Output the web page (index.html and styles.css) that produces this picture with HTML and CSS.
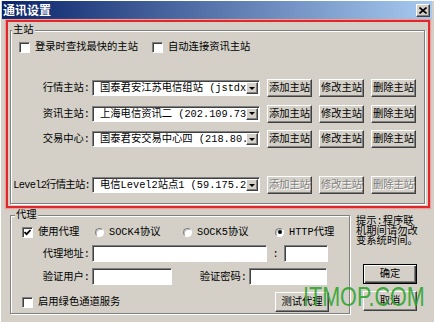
FILE: index.html
```html
<!DOCTYPE html>
<html lang="zh-CN">

<head>
    <meta charset="UTF-8">
    <meta name="viewport" content="width=device-width, initial-scale=1.0">
    <title>通讯设置</title>
    <link rel="stylesheet" href="styles.css">
</head>

<body>
    <div class="window">
        <div class="titlebar">
            <span class="title">通讯设置</span>
            <span class="close">
                <svg width="8" height="7" viewBox="0 0 8 7"><path d="M0.5 0.5 L7.5 6.5 M7.5 0.5 L0.5 6.5" stroke="#000" stroke-width="1.6" /></svg>
            </span>
        </div>

        <div class="highlight">
            <fieldset class="group main-group">
                <legend>主站</legend>
                <div class="opts">
                    <label class="check opt-fast"><span class="cb"></span>登录时查找最快的主站</label>
                    <label class="check"><span class="cb"></span>自动连接资讯主站</label>
                </div>

                <div class="servers">
                    <div class="srow">
                        <span class="lbl">行情主站:</span>
                        <div class="combo"><span class="combo-text">国泰君安江苏电信组站 (jstdx.gtja.net)</span><span class="drop"></span></div>
                        <button type="button" class="btn">添加主站</button>
                        <button type="button" class="btn">修改主站</button>
                        <button type="button" class="btn">删除主站</button>
                    </div>
                    <div class="srow">
                        <span class="lbl">资讯主站:</span>
                        <div class="combo"><span class="combo-text">上海电信资讯二 (202.109.73.16)</span><span class="drop"></span></div>
                        <button type="button" class="btn">添加主站</button>
                        <button type="button" class="btn">修改主站</button>
                        <button type="button" class="btn">删除主站</button>
                    </div>
                    <div class="srow">
                        <span class="lbl">交易中心:</span>
                        <div class="combo"><span class="combo-text">国泰君安交易中心四 (218.80.240.3)</span><span class="drop"></span></div>
                        <button type="button" class="btn">添加主站</button>
                        <button type="button" class="btn">修改主站</button>
                        <button type="button" class="btn">删除主站</button>
                    </div>
                </div>

                <div class="srow level2">
                    <span class="lbl tight">Level2行情主站:</span>
                    <div class="combo"><span class="combo-text">电信Level2站点1 (59.175.238.4)</span><span class="drop"></span></div>
                    <button type="button" class="btn" disabled>添加主站</button>
                    <button type="button" class="btn" disabled>修改主站</button>
                    <button type="button" class="btn" disabled>删除主站</button>
                </div>
            </fieldset>
        </div>

        <div class="lower">
            <fieldset class="group proxy-group">
                <legend>代理</legend>
                <div class="ptypes">
                    <label class="check"><span class="cb"><svg width="7" height="7" viewBox="0 0 7 7"><path d="M0.5 3 L2.6 5.2 L6.5 1" stroke="#000" stroke-width="1.7" fill="none" /></svg></span>使用代理</label>
                    <label class="radio"><span class="rb"></span>SOCK4协议</label>
                    <label class="radio"><span class="rb"></span>SOCK5协议</label>
                    <label class="radio"><span class="rb on"></span>HTTP代理</label>
                </div>
                <div class="prow">
                    <span class="lbl">代理地址:</span>
                    <span class="edit addr"></span>
                    <span class="sep">:</span>
                    <span class="edit port"></span>
                </div>
                <div class="prow">
                    <span class="lbl">验证用户:</span>
                    <span class="edit user"></span>
                    <span class="lbl pass-lbl">验证密码:</span>
                    <span class="edit pass"></span>
                </div>
                <div class="prow last">
                    <label class="check green"><span class="cb"></span>启用绿色通道服务</label>
                    <button type="button" class="btn test">测试代理</button>
                </div>
            </fieldset>

            <div class="side">
                <p class="hint">提示:程序联机期间请勿改变系统时间。</p>
                <button type="button" class="btn default">确定</button>
                <button type="button" class="btn cancel">取消</button>
            </div>
        </div>

        <div class="watermark">ITMOP.COM</div>
    </div>
</body>

</html>
```

FILE: styles.css
```css
* {
    box-sizing: border-box;
}

body {
    margin: 0;
    background: #d4d0c8;
    color: #000;
    font-family: "Liberation Mono", "Noto Sans CJK SC", monospace;
    font-size: 10.3px;
    line-height: 14px;
}

.window {
    position: relative;
    width: 434px;
    height: 322px;
    overflow: hidden;
    background: #d4d0c8;
    box-shadow: inset 1px 1px 0 #fff;
}

/* title bar */
.titlebar {
    display: flex;
    align-items: center;
    justify-content: space-between;
    height: 18px;
    margin: 1px 2px 0 2px;
    padding: 0 2px 0 1px;
    background: linear-gradient(to right, #0a246a, #a6caf0);
}

.title {
    color: #fff;
    font-family: "Noto Sans CJK SC", sans-serif;
    font-weight: bold;
    font-size: 12px;
}

.close {
    display: flex;
    align-items: center;
    justify-content: center;
    width: 14px;
    height: 13px;
    background: #d4d0c8;
    border: 1px solid;
    border-color: #fff #404040 #404040 #fff;
    box-shadow: inset -1px -1px 0 #808080;
}

/* red annotation box */
.highlight {
    width: 424px;
    height: 188px;
    margin: 1px 0 0 6px;
    border: 2px solid #e3262a;
    box-shadow: 0 0 1px 1px rgba(240, 130, 130, 0.6);
}

/* group boxes */
.group {
    margin: 0;
    padding: 0;
    min-width: 0;
    border: 1px solid #808080;
    box-shadow: 1px 1px 0 #fff, inset 1px 1px 0 #fff;
}

.group legend {
    margin-left: 1px;
    padding: 0 1px;
    line-height: 13px;
    background: #d4d0c8;
}

.main-group {
    width: 415px;
    margin: 2px 0 0 2px;
    padding-bottom: 9px;
}

.opts {
    display: flex;
    align-items: center;
    height: 14px;
    margin-top: 3px;
    padding-left: 8px;
}

.check,
.radio {
    display: flex;
    align-items: center;
    white-space: nowrap;
}

.opt-fast {
    width: 133px;
}

.cb {
    display: flex;
    align-items: center;
    justify-content: center;
    flex: none;
    width: 11px;
    height: 11px;
    margin-right: 5px;
    background: #fff;
    border: 1px solid;
    border-color: #808080 #fff #fff #808080;
    box-shadow: inset 1px 1px 0 #404040;
}

.rb {
    position: relative;
    flex: none;
    width: 9px;
    height: 9px;
    margin-right: 5px;
    border-radius: 50%;
    background: #fff;
    border: 1px solid;
    border-color: #808080 #fff #fff #808080;
    box-shadow: inset 1px 1px 0 #c0c0c0;
}

.rb.on::after {
    content: "";
    position: absolute;
    left: 1.5px;
    top: 1.5px;
    width: 4px;
    height: 4px;
    border-radius: 50%;
    background: #000;
}

/* server rows */
.servers {
    display: flex;
    flex-direction: column;
    gap: 7.5px;
    margin-top: 25px;
}

.srow {
    display: flex;
    align-items: center;
    height: 18px;
}

.level2 {
    margin-top: 28px;
}

.lbl {
    flex: none;
    width: 79px;
    margin-right: 2px;
    text-align: right;
    white-space: nowrap;
}

.tight {
    letter-spacing: -0.7px;
}

.combo {
    display: flex;
    flex: none;
    width: 168px;
    height: 16px;
    padding: 1px;
    background: #fff;
    border: 1px solid;
    border-color: #808080 #fff #fff #808080;
    box-shadow: inset 1px 1px 0 #404040;
}

.combo-text {
    flex: 1;
    overflow: hidden;
    white-space: nowrap;
    padding-left: 6px;
    line-height: 12px;
}

.drop {
    display: flex;
    align-items: center;
    justify-content: center;
    flex: none;
    width: 12px;
    height: 12px;
    background: #d4d0c8;
    border: 1px solid;
    border-color: #fff #404040 #404040 #fff;
    box-shadow: inset -1px -1px 0 #808080;
}

.drop::after {
    content: "";
    border-left: 3px solid transparent;
    border-right: 3px solid transparent;
    border-top: 3px solid #000;
}

.btn {
    flex: none;
    width: 45px;
    height: 18px;
    padding: 0;
    font: inherit;
    color: #000;
    background: #d4d0c8;
    border: 1px solid;
    border-color: #fff #404040 #404040 #fff;
    box-shadow: inset -1px -1px 0 #808080;
}

.srow .btn {
    margin-left: 7px;
}

.btn:disabled {
    color: #808080;
    text-shadow: 1px 1px 0 #fff;
}

/* lower part */
.lower {
    display: flex;
    align-items: flex-start;
}

.proxy-group {
    width: 340px;
    margin: 1px 0 0 10px;
    padding-bottom: 1px;
}

.proxy-group legend {
    margin-left: 4px;
}

.ptypes {
    display: grid;
    grid-template-columns: 73px 88px 92px auto;
    align-items: center;
    height: 14px;
    margin-top: 3px;
    padding-left: 11px;
}

.prow {
    display: flex;
    align-items: center;
    margin-top: 6px;
}

.edit {
    flex: none;
    height: 17px;
    background: #fff;
    border: 1px solid;
    border-color: #808080 #fff #fff #808080;
    box-shadow: inset 1px 1px 0 #404040;
}

.addr {
    width: 175px;
}

.sep {
    width: 17px;
    text-align: center;
}

.port {
    width: 44px;
}

.user {
    width: 80px;
}

.pass-lbl {
    width: 75px;
}

.pass {
    width: 78px;
}

.prow.last {
    margin-top: 7px;
    padding-left: 11px;
}

.green {
    flex: 1;
}

.test {
    width: 54px;
    height: 20px;
    margin-right: 20px;
}

.side {
    display: flex;
    flex-direction: column;
    width: 72px;
    margin-left: 6px;
    padding-top: 8px;
}

.hint {
    width: 67px;
    margin: 0;
    line-height: 10px;
}

.side .btn {
    width: 54px;
    height: 20px;
    margin-left: 7px;
}

.default {
    margin-top: 18px;
    border-color: #000;
    box-shadow: inset 1px 1px 0 #fff, inset -1px -1px 0 #404040, inset -2px -2px 0 #808080;
}

.cancel {
    margin-top: 7px;
}

/* site watermark */
.watermark {
    position: absolute;
    left: 303px;
    top: 283px;
    font-family: "Liberation Sans", Arial, sans-serif;
    font-size: 28px;
    line-height: 1;
    color: rgba(44, 165, 44, 0.9);
    transform: scaleX(0.77);
    transform-origin: left top;
    pointer-events: none;
}
```
